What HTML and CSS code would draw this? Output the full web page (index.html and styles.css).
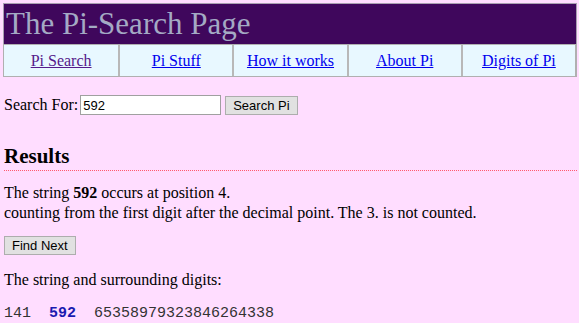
FILE: index.html
```html
<!DOCTYPE html>
<html lang="en">
<head>
    <meta charset="UTF-8">
    <title>The Pi-Search Page</title>
    <link rel="stylesheet" href="styles.css">
</head>
<body>
    <div class="header">The Pi-Search Page</div>
    <div class="nav">
        <a class="visited" href="#">Pi Search</a>
        <a href="#">Pi Stuff</a>
        <a href="#">How it works</a>
        <a href="#">About Pi</a>
        <a href="#">Digits of Pi</a>
    </div>

    <form class="search">
        <label for="q">Search For:</label>
        <input id="q" type="text" value="592">
        <button type="button">Search Pi</button>
    </form>

    <h2 class="results">Results</h2>

    <p class="found">The string <b>592</b> occurs at position 4.<br>
    counting from the first digit after the decimal point. The 3. is not counted.</p>

    <button type="button" class="next">Find Next</button>

    <p class="surround">The string and surrounding digits:</p>
    <pre class="digits">141  <span class="hit">592</span>  65358979323846264338</pre>
</body>
</html>
```

FILE: styles.css
```css
body {
    margin: 3px 2px 0 3px;
    background-color: #ffddff;
    font-family: "Liberation Serif", "Times New Roman", serif;
    font-size: 16px;
    color: #000;
}

.header {
    background-color: #3f075c;
    color: #a4aac4;
    font-size: 31px;
    line-height: 40px;
    padding: 0 2px;
    border: 1px solid #a8a0b0;
    border-bottom: none;
}

.nav {
    display: grid;
    grid-template-columns: repeat(5, 1fr);
    background-color: #e8f8ff;
    border: 1px solid #b0b0b0;
    border-right-width: 2px;
}

.nav a {
    text-align: center;
    line-height: 31px;
    color: #0000ee;
    border-left: 2px solid #b8b8b8;
}

.nav a:first-child {
    border-left: none;
}

.nav a.visited {
    color: #551a8b;
}

.search {
    margin: 18px 0 0 1px;
    display: flex;
    align-items: center;
}

.search input {
    margin: 0 4px 0 2px;
    width: 135px;
    height: 16px;
    padding: 1px 2px;
    border: 1px solid #a0a0a0;
    font-family: "Liberation Sans", Arial, sans-serif;
    font-size: 13px;
}

button {
    font-family: "Liberation Sans", Arial, sans-serif;
    font-size: 13px;
    background-color: #e1e1e1;
    border: 1px solid #adadad;
    color: #000;
    padding: 1px 7px;
    height: 19px;
}

.results {
    margin: 29px 0 0 1px;
    font-size: 21px;
    padding-bottom: 1px;
    border-bottom: 1px dotted #ff5a6e;
}

.found {
    margin: 12px 0 0 1px;
    line-height: 20px;
}

.next {
    margin: 13px 0 0 1px;
}

.surround {
    margin: 16px 0 0 1px;
}

.digits {
    margin: 16px 0 0 1px;
    font-family: "Liberation Mono", "Courier New", monospace;
    font-size: 15px;
    color: #333;
}

.hit {
    color: #1a1ab0;
    font-weight: bold;
}
```
